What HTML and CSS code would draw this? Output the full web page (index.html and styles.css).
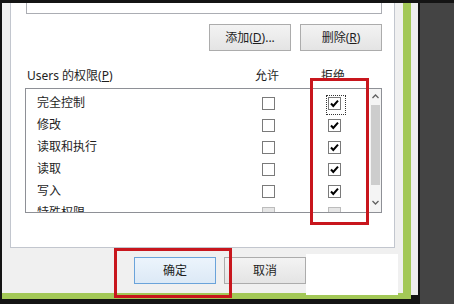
FILE: index.html
```html
<!DOCTYPE html>
<html lang="zh-CN">
  <head>
    <meta charset="UTF-8" />
    <title>Users 的权限</title>
    <link rel="stylesheet" href="styles.css">
  </head>
  <body>
    <div class="desk">
      <div class="win">
        <div class="panel">
          <div class="textbox"></div>
          <div class="btn-row">
            <button class="btn">添加(<u>D</u>)...</button>
            <button class="btn">删除(<u>R</u>)</button>
          </div>
          <div class="perm-head">
            <span>Users 的权限(<u>P</u>)</span>
            <span class="col">允许</span>
            <span class="col">拒绝</span>
          </div>
          <div class="perm-list">
            <div class="rows">
              <div class="row">
                <span>完全控制</span>
                <span class="cb"></span>
                <span class="focus"><span class="cb checked"><svg viewBox="0 0 11 11"><path d="M2 5.5 L4.3 8 L9 2.6" /></svg></span></span>
              </div>
              <div class="row">
                <span>修改</span>
                <span class="cb"></span>
                <span class="cb checked"><svg viewBox="0 0 11 11"><path d="M2 5.5 L4.3 8 L9 2.6" /></svg></span>
              </div>
              <div class="row">
                <span>读取和执行</span>
                <span class="cb"></span>
                <span class="cb checked"><svg viewBox="0 0 11 11"><path d="M2 5.5 L4.3 8 L9 2.6" /></svg></span>
              </div>
              <div class="row">
                <span>读取</span>
                <span class="cb"></span>
                <span class="cb checked"><svg viewBox="0 0 11 11"><path d="M2 5.5 L4.3 8 L9 2.6" /></svg></span>
              </div>
              <div class="row">
                <span>写入</span>
                <span class="cb"></span>
                <span class="cb checked"><svg viewBox="0 0 11 11"><path d="M2 5.5 L4.3 8 L9 2.6" /></svg></span>
              </div>
              <div class="row">
                <span>特殊权限</span>
                <span class="cb disabled"></span>
                <span class="cb disabled"></span>
              </div>
            </div>
            <div class="scrollbar">
              <div class="sb-btn"><svg viewBox="0 0 7 5"><path d="M0.5 4 L3.5 1 L6.5 4" /></svg></div>
              <div class="sb-track"><div class="sb-thumb"></div></div>
              <div class="sb-btn sb-down"><svg viewBox="0 0 7 5"><path d="M0.5 1 L3.5 4 L6.5 1" /></svg></div>
            </div>
          </div>
        </div>
        <div class="dlg-buttons">
          <button class="btn btn-default">确定</button>
          <button class="btn">取消</button>
        </div>

        <!-- annotations drawn over the dialog -->
        <div class="mark mark-deny"></div>
        <div class="mark mark-ok"></div>
        <div class="blank"></div>
      </div>
      <div class="gap"></div>
      <div class="side"></div>
    </div>
  </body>
</html>
```

FILE: styles.css
```css
body {
  margin: 0;
  background-color: #141414;
  font-family: "Noto Sans", "Noto Sans CJK SC", sans-serif;
  font-size: 12px;
  line-height: 16px;
  color: #1e1e1e;
}

.desk {
  display: flex;
  height: 304px;
  box-sizing: border-box;
  padding: 3px 0 0 2px;
  overflow: hidden;
}

.win {
  position: relative;
  flex: none;
  width: 401px;
  height: 290px;
  background: #f0f0f0;
  border-right: 8px solid #a3c857;
  border-bottom: 6px solid #a3c857;
}

.gap {
  flex: none;
  width: 7px;
  height: 292px;
  background: #eeeeee;
}

.side {
  flex: 1;
  margin-left: 2px;
  background: #444444;
}

.panel {
  margin-left: 8px;
  width: 385px;
  height: 245px;
  box-sizing: border-box;
  padding: 0 12px 0 14px;
  background: #fff;
  border: 1px solid #c2c6ce;
  border-top: none;
}

.textbox {
  margin-left: 1px;
  width: 356px;
  height: 11px;
  box-sizing: border-box;
  border: 1px solid #abadb3;
  border-top: none;
}

.btn-row {
  display: flex;
  justify-content: flex-end;
  gap: 9px;
  margin-top: 10px;
}

.btn {
  width: 82px;
  height: 27px;
  padding: 0;
  font: inherit;
  color: inherit;
  border: 1px solid #acacac;
  background: linear-gradient(#f3f3f3, #e4e4e4);
}

.btn-default {
  border-color: #6aa3da;
  background: linear-gradient(#ecf4fc, #dce9f6);
}

.perm-head {
  display: grid;
  grid-template-columns: 1fr 66px 66px;
  align-items: center;
  height: 20px;
  margin-top: 15px;
  padding: 0 16px 0 2px;
}

.perm-head .col {
  text-align: center;
}

.perm-list {
  display: flex;
  height: 125px;
  margin-top: 2px;
  box-sizing: border-box;
  border: 1px solid #8e9096;
}

.rows {
  flex: 1;
  overflow: hidden;
  padding: 3px 3px 0 11px;
}

.row {
  display: grid;
  grid-template-columns: 1fr 66px 66px;
  align-items: center;
  height: 22px;
}

.cb {
  justify-self: center;
  display: flex;
  align-items: center;
  justify-content: center;
  width: 13px;
  height: 13px;
  box-sizing: border-box;
  border: 1px solid #7a7a7a;
  background: #fff;
}

.cb svg {
  width: 11px;
  height: 11px;
}

.cb path {
  fill: none;
  stroke: #000;
  stroke-width: 2;
}

.cb.disabled {
  border-color: #bcbcbc;
  background: #e6e6e6;
}

.focus {
  justify-self: center;
  padding: 1px 4px 4px 1px;
  margin: -2px -5px -5px -2px;
  border: 1px dotted #333;
}

.scrollbar {
  display: flex;
  flex-direction: column;
  width: 11px;
  background: #f4f4f4;
}

.sb-btn {
  display: flex;
  align-items: center;
  justify-content: center;
  height: 15px;
}

.sb-down {
  height: 19px;
}

.sb-btn svg {
  width: 7px;
  height: 5px;
}

.sb-btn path {
  fill: none;
  stroke: #606060;
  stroke-width: 1.3;
}

.sb-track {
  flex: 1;
  padding: 1px 1px 0;
}

.sb-thumb {
  height: 80px;
  background: #cdcdcd;
}

.dlg-buttons {
  display: flex;
  gap: 8px;
  margin-top: 9px;
  padding-left: 132px;
}

.mark {
  position: absolute;
  box-sizing: border-box;
  border: 3px solid #c8161d;
}

.mark-deny {
  left: 308px;
  top: 75px;
  width: 59px;
  height: 147px;
}

.mark-ok {
  left: 112px;
  top: 245px;
  width: 118px;
  height: 50px;
}

.blank {
  position: absolute;
  left: 304px;
  top: 251px;
  width: 92px;
  height: 41px;
  background: #fff;
}
```
